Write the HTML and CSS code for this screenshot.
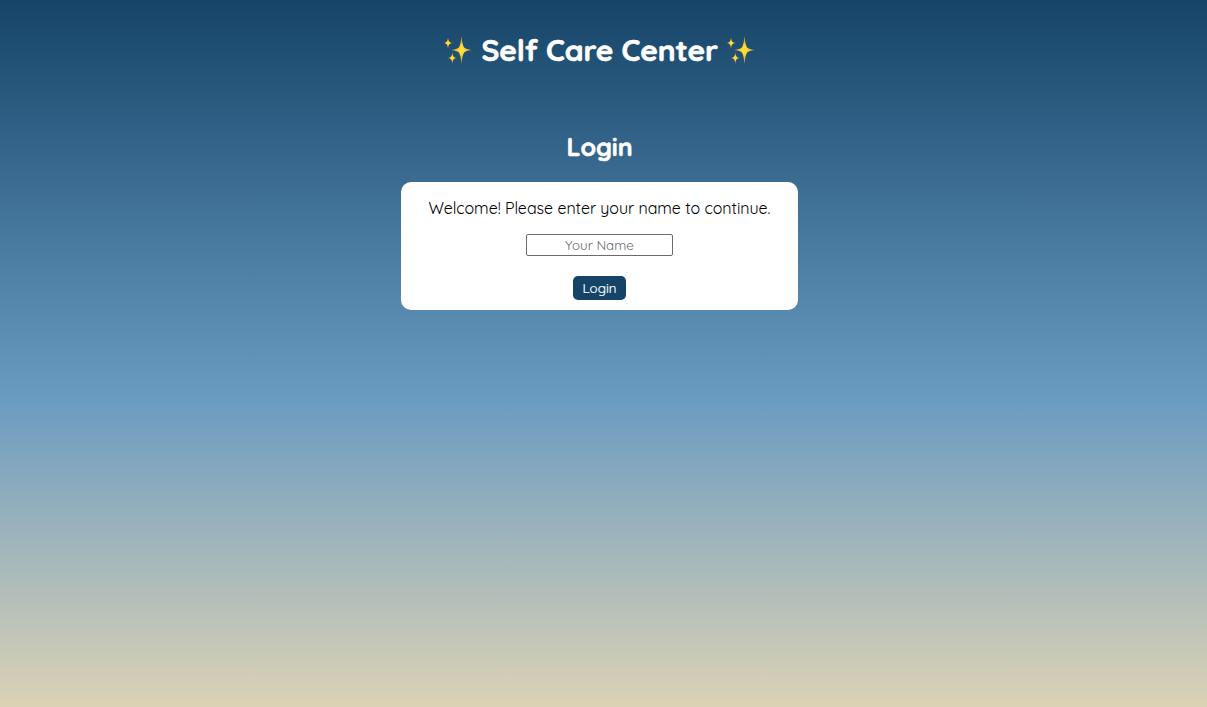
FILE: index.html
```html
<!DOCTYPE html>
<html lang="en">
<head>
<meta charset="utf-8">
<title>Self Care Center</title>
<link rel="stylesheet" href="styles.css">
</head>
<body>
<svg class="defs" width="0" height="0" aria-hidden="true">
  <defs>
    <radialGradient id="gold"><stop offset="0" stop-color="#ffe53f"/><stop offset=".35" stop-color="#fbd337"/><stop offset="1" stop-color="#c07a35"/></radialGradient>
    <symbol id="sparkles" viewBox="0 0 28 28">
      <path fill="url(#gold)" d="M17.5 0Q18.5 10.8 20.7 12.1Q22 13 27.8 14Q22 15 20.7 15.9Q18.5 17.2 17.5 28Q16.5 17.2 14.3 15.9Q13 15 7.2 14Q13 13 14.3 12.1Q16.5 10.8 17.5 0Z"/>
      <path fill="url(#gold)" d="M4 1Q4.4 5.3 5.5 5.8Q6 6.5 8.7 7Q6 7.5 5.5 8.2Q4.4 8.7 4 13Q3.6 8.7 2.5 8.2Q2 7.5 -.4 7Q2 6.5 2.5 5.8Q3.6 5.3 4 1Z"/>
      <path fill="url(#gold)" d="M8.3 16Q8.7 20.3 9.8 20.8Q10.3 21.5 12.7 22Q10.3 22.5 9.8 23.2Q8.7 23.7 8.3 28Q7.9 23.7 6.8 23.2Q6.3 22.5 3.9 22Q6.3 21.5 6.8 20.8Q7.9 20.3 8.3 16Z"/>
    </symbol>
  </defs>
</svg>
<header class="header">
  <svg class="sparkles" aria-hidden="true"><use href="#sparkles"/></svg>
  <h1 class="title">Self Care Center</h1>
  <svg class="sparkles" aria-hidden="true"><use href="#sparkles"/></svg>
</header>
<main class="main">
  <h2 class="heading">Login</h2>
  <form class="card">
    <p class="welcome">Welcome! Please enter your name to continue.</p>
    <input class="name" type="text" placeholder="Your Name">
    <button class="login" type="button">Login</button>
  </form>
</main>
</body>
</html>
```

FILE: styles.css
```css
html {
  height: 100%;
}

body {
  box-sizing: border-box;
  height: 100%;
  margin: 0;
  padding: 30px 8px 0 0;
  overflow: hidden;
  background: linear-gradient(#154468 0, #699bc1 56%, #dcd2b6 100%) no-repeat;
  font-family: Quicksand, Lato, sans-serif;
}

.defs {
  position: absolute;
}

.header {
  display: flex;
  justify-content: center;
  align-items: center;
  gap: 9.5px;
  height: 40px;
  color: #fff;
}

.sparkles {
  width: 28px;
  height: 28px;
  overflow: visible;
}

.title {
  width: 236px;
  margin: 0;
  font-size: 30px;
  font-weight: 700;
  letter-spacing: -.13px;
  line-height: 40px;
  text-align: center;
  white-space: nowrap;
  -webkit-text-stroke: .6px #fff;
}

.main {
  display: flex;
  flex-direction: column;
  align-items: center;
  padding-top: 61px;
}

.heading {
  margin: 0 0 19px;
  color: #fff;
  font-size: 25px;
  font-weight: 700;
  letter-spacing: -.1px;
  line-height: 32px;
  -webkit-text-stroke: .5px #fff;
}

.card {
  box-sizing: border-box;
  display: flex;
  flex-direction: column;
  align-items: center;
  width: 397px;
  height: 128px;
  padding-top: 16px;
  border-radius: 10px;
  background: #fff;
}

.welcome {
  margin: 0 0 16px;
  color: #000;
  font-size: 16px;
  letter-spacing: -.04px;
  line-height: 20px;
  white-space: nowrap;
}

.name {
  box-sizing: border-box;
  width: 147px;
  height: 22px;
  margin: 0 0 20px;
  padding: 1px 2px;
  border: 1px solid #6b6b6b;
  border-radius: 2px;
  font: 13.33px Quicksand, Lato, sans-serif;
  text-align: center;
}

.name::placeholder {
  color: #656565;
}

.login {
  width: 53px;
  height: 24px;
  padding: 0;
  border: 0;
  border-radius: 5px;
  background: #154468;
  color: #fff;
  font: 13.33px/24px Quicksand, Lato, sans-serif;
  -webkit-text-stroke: .2px #fff;
}
```
